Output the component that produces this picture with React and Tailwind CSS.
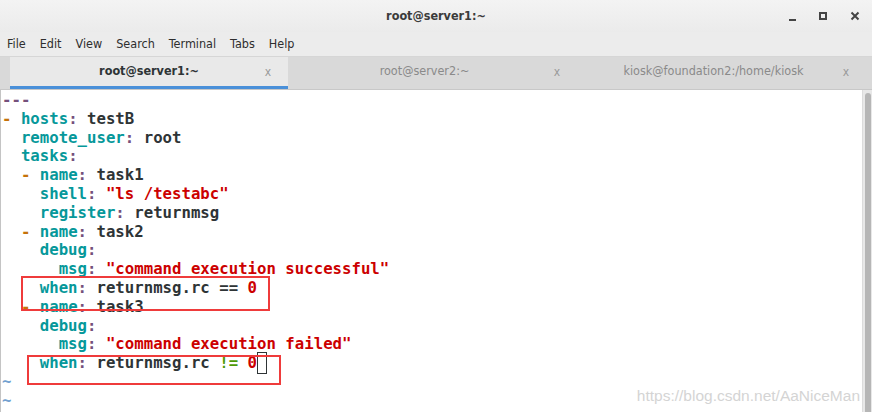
const K = "text-[#06989a]";
const C = "text-[#75507b]";
const D = "text-[#c4720a]";
const V = "text-[#2e3436]";
const S = "text-[#cc0000]";
const G = "text-[#4e9a06]";
const T = "text-[#729fcf]";

const lines = [
  [[C, "---"]],
  [[D, "-"], [V, " "], [K, "hosts"], [C, ":"], [V, " testB"]],
  [[V, "  "], [K, "remote_user"], [C, ":"], [V, " root"]],
  [[V, "  "], [K, "tasks"], [C, ":"]],
  [[V, "  "], [D, "-"], [V, " "], [K, "name"], [C, ":"], [V, " task1"]],
  [[V, "    "], [K, "shell"], [C, ":"], [V, " "], [S, '"ls /testabc"']],
  [[V, "    "], [K, "register"], [C, ":"], [V, " returnmsg"]],
  [[V, "  "], [D, "-"], [V, " "], [K, "name"], [C, ":"], [V, " task2"]],
  [[V, "    "], [K, "debug"], [C, ":"]],
  [[V, "      "], [K, "msg"], [C, ":"], [V, " "], [S, '"command execution successful"']],
  [[V, "    "], [K, "when"], [C, ":"], [V, " returnmsg.rc == "], [S, "0"]],
  [[V, "  "], [D, "-"], [V, " "], [K, "name"], [C, ":"], [V, " task3"]],
  [[V, "    "], [K, "debug"], [C, ":"]],
  [[V, "      "], [K, "msg"], [C, ":"], [V, " "], [S, '"command execution failed"']],
  [[V, "    "], [K, "when"], [C, ":"], [V, " returnmsg.rc "], [G, "!="], [V, " "], [S, "0"]],
  [[T, "~"]],
  [[T, "~"]],
];

const uiFont = { fontFamily: '"DejaVu Sans Condensed", "DejaVu Sans", sans-serif' };

function Tab({ label, active, className }) {
  return (
    <div
      className={
        "grid items-center h-full " +
        className +
        (active ? " bg-[#e9e9e9] border-b-[3px] border-[#4a90d9]" : " bg-[#d9d9d9] border-b-[3px] border-[#d9d9d9]")
      }
    >
      <div />
      <div className={"text-center text-[12.5px] whitespace-nowrap " + (active ? "text-[#2e3436] font-bold" : "text-[#8a8a8a]")}>
        {label}
      </div>
      <div className="text-center text-[12px] text-[#9a9a9a]">x</div>
    </div>
  );
}

export default function App() {
  return (
    <div className="w-[872px] h-[412px] overflow-hidden bg-white flex flex-col" style={uiFont}>
      <div className="h-[32px] grid grid-cols-[1fr_auto_1fr] items-center bg-gradient-to-b from-[#f3f3f3] to-[#ebebeb]">
        <div />
        <div className="text-[12.5px] font-bold text-[#3b3b3b]">root@server1:~</div>
        <div className="flex justify-end items-center gap-[23px] pr-[12px] text-[#3a3a3a]">
          <div className="w-[7px] h-[2px] bg-[#444] mt-[7px]" />
          <div className="w-[8px] h-[8px] border-2 border-[#444]" />
          <svg width="10" height="10" viewBox="0 0 10 10">
            <path d="M1.5 1.5 L8.5 8.5 M8.5 1.5 L1.5 8.5" stroke="#444" strokeWidth="2" />
          </svg>
        </div>
      </div>
      <div className="h-[25px] flex items-center gap-[14px] pl-[7px] bg-[#ececec] text-[12.5px] text-[#2e2e2e] border-b border-[#d6d6d6]">
        {["File", "Edit", "View", "Search", "Terminal", "Tabs", "Help"].map((m) => (
          <span key={m}>{m}</span>
        ))}
      </div>
      <div className="h-[33px] flex bg-[#d9d9d9] pl-[10px] border-b border-[#c8c8c8]">
        <Tab label="root@server1:~" active className="w-[278px] grid-cols-[40px_1fr_40px]" />
        <Tab label="root@server2:~" className="w-[289px] grid-cols-[24px_1fr_40px]" />
        <Tab label="kiosk@foundation2:/home/kiosk" className="w-[289px] grid-cols-[24px_1fr_40px]" />
      </div>
      <div className="flex-1 flex min-h-0">
        <div
          className="flex-1 relative pt-[1px] pl-[1px] border-l border-[#c4c4c4] font-bold text-[15.7px] leading-[18.8px] whitespace-pre"
          style={{ fontFamily: '"DejaVu Sans Mono", monospace' }}
        >
          {lines.map((segs, i) => (
            <div key={i} className="flex h-[18.8px]">
              {segs.map(([cls, txt], j) => (
                <span key={j} className={cls}>
                  {txt}
                </span>
              ))}
              {i === 14 && <span className="inline-block w-[10px] h-[22px] -mt-[2px] border border-[#2e3436]" />}
            </div>
          ))}
          <div className="absolute left-[20px] top-[186px] w-[249px] h-[35px] border-2 border-[#ef3b3b]" />
          <div className="absolute left-[26px] top-[265px] w-[254px] h-[30px] border-2 border-[#ef3b3b]" />
          <div
            className="absolute right-[2px] top-[297px] text-[15.5px] font-normal text-[#d4d4d4]"
            style={{ fontFamily: '"Liberation Sans", Arial, sans-serif' }}
          >
            https://blog.csdn.net/AaNiceMan
          </div>
        </div>
        <div className="w-[10px] bg-[#e8e8e8] border-l border-[#dcdcdc] pt-[3px] pl-[2px]">
          <div className="w-[6px] h-[330px] rounded-full bg-[#b6b6b6]" />
        </div>
      </div>
    </div>
  );
}
